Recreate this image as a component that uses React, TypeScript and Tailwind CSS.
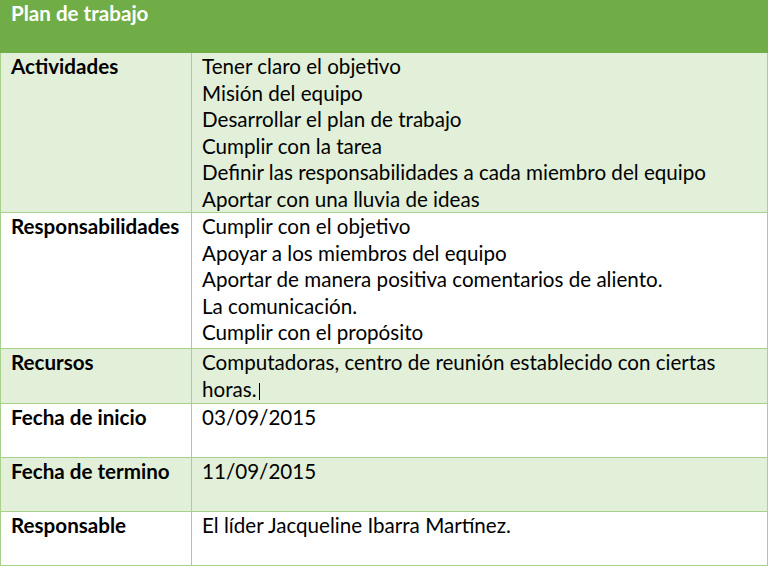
const rows: { label: string; lines: string[]; shaded: boolean; height: string }[] = [
  {
    label: 'Actividades',
    lines: [
      'Tener claro el objetivo',
      'Misión del equipo',
      'Desarrollar el plan de trabajo',
      'Cumplir con la tarea',
      'Definir las responsabilidades a cada miembro del equipo',
      'Aportar con una lluvia de ideas',
    ],
    shaded: true,
    height: 'h-[160px]',
  },
  {
    label: 'Responsabilidades',
    lines: [
      'Cumplir con el objetivo',
      'Apoyar a los miembros del equipo',
      'Aportar de manera positiva comentarios de aliento.',
      'La comunicación.',
      'Cumplir con el propósito',
    ],
    shaded: false,
    height: 'h-[136px]',
  },
  {
    label: 'Recursos',
    lines: ['Computadoras, centro de reunión establecido con ciertas', 'horas.'],
    shaded: true,
    height: 'h-[55px]',
  },
  { label: 'Fecha de inicio', lines: ['03/09/2015'], shaded: false, height: 'h-[54px]' },
  { label: 'Fecha de termino', lines: ['11/09/2015'], shaded: true, height: 'h-[54px]' },
  {
    label: 'Responsable',
    lines: ['El líder Jacqueline Ibarra Martínez.'],
    shaded: false,
    height: 'h-[54px]',
  },
];

export default function App() {
  return (
    <div className="w-[769px] h-[566px] bg-white font-['Lato','Noto_Sans',sans-serif] text-[20.6px] leading-[26.6px] text-black">
      <div className="w-[768px]">
        <div className="h-[53px] bg-[#70ad47] pl-[11px] font-bold text-white">
          Plan de trabajo
        </div>
        {rows.map((row) => (
          <div
            key={row.label}
            className={`flex ${row.height} border-x border-b border-[#a8d08d] ${
              row.shaded ? 'bg-[#e2efd9]' : 'bg-white'
            }`}
          >
            <div className="w-[191px] shrink-0 border-r border-[#a8d08d] pl-[10px] font-bold">
              {row.label}
            </div>
            <div className="flex-1 pl-[10px]">
              {row.lines.map((line, j) => (
                <div key={j}>
                  {line}
                  {line === 'horas.' && (
                    <span className="ml-[2px] inline-block h-[17px] w-px bg-black align-[-3px]" />
                  )}
                </div>
              ))}
            </div>
          </div>
        ))}
      </div>
    </div>
  );
}
